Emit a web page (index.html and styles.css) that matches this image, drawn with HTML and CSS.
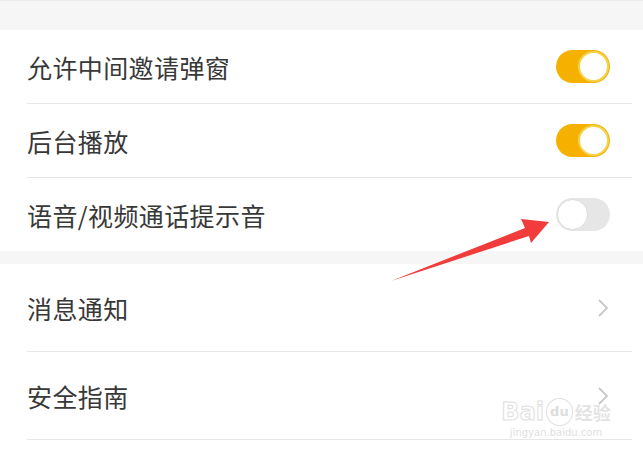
FILE: index.html
```html
<!DOCTYPE html>
<html lang="zh">
<head>
<meta charset="utf-8">
<link rel="stylesheet" href="styles.css">
</head>
<body>
<div class="page">
  <div class="gap gap-top"></div>
  <div class="group">
    <div class="row">
      <span class="label">允许中间邀请弹窗</span>
      <span class="toggle on"><span class="knob"></span></span>
    </div>
    <div class="row">
      <span class="label">后台播放</span>
      <span class="toggle on"><span class="knob"></span></span>
    </div>
    <div class="row last">
      <span class="label">语音/视频通话提示音</span>
      <span class="toggle off"><span class="knob"></span></span>
    </div>
  </div>
  <div class="gap gap-mid"></div>
  <div class="group">
    <div class="row tall">
      <span class="label">消息通知</span>
      <svg class="chev" width="12" height="20" viewBox="0 0 12 20"><path d="M2 2 L10 10 L2 18" fill="none" stroke="#c8c8c8" stroke-width="1.8"/></svg>
    </div>
    <div class="row tall">
      <span class="label">安全指南</span>
      <svg class="chev" width="12" height="20" viewBox="0 0 12 20"><path d="M2 2 L10 10 L2 18" fill="none" stroke="#c8c8c8" stroke-width="1.8"/></svg>
    </div>
    <div class="row tall"></div>
  </div>

  <svg class="arrow" width="643" height="461" viewBox="0 0 643 461">
    <path d="M391 281 L525 228 L521 219 L549 222 L531 243 L529 236 Z" fill="#f23b3b"/>
  </svg>

  <div class="watermark">
    <div class="wm-top"><span class="wm-bai">Bai</span><span class="wm-du">du</span><span class="wm-cn">经验</span></div>
    <div class="wm-url">jingyan.baidu.com</div>
  </div>
</div>
</body>
</html>
```
FILE: styles.css
```css
html, body {
  margin: 0;
  padding: 0;
}
body {
  background: #f7f7f7;
  font-family: "Noto Sans CJK SC", "Noto Sans", sans-serif;
  color: #333333;
}
.page {
  position: relative;
  width: 643px;
  height: 461px;
  overflow: hidden;
}
.gap-top {
  height: 29px;
  border-top: 1px solid #ececec;
  background: #f6f6f6;
}
.gap-mid {
  height: 13px;
  background: #f6f6f6;
}
.group {
  background: #ffffff;
}
.row {
  height: 73px;
  margin: 0 11px 0 27px;
  padding-right: 22px;
  border-bottom: 1px solid #e6e6e6;
  display: flex;
  align-items: center;
  justify-content: space-between;
}
.row.last {
  border-bottom: none;
}
.row.tall {
  height: 87px;
  padding-right: 23px;
}
.label {
  font-size: 25px;
  letter-spacing: 0.4px;
  color: #383838;
}
.toggle {
  width: 54px;
  height: 33px;
  border-radius: 17px;
  box-sizing: border-box;
  display: flex;
  align-items: center;
}
.toggle .knob {
  width: 31px;
  height: 31px;
  border-radius: 50%;
  background: #ffffff;
  box-sizing: border-box;
}
.toggle.on {
  background: #f6b100;
  justify-content: flex-end;
  padding: 1px;
}
.toggle.on .knob {
  border: 2px solid #f3d24e;
}
.toggle.off {
  background: #e6e6e6;
  justify-content: flex-start;
  padding: 1px;
}
.toggle.off .knob {
  border: 1px solid #dddddd;
}
.chev {
  display: block;
}
.arrow {
  position: absolute;
  left: 0;
  top: 0;
  pointer-events: none;
}
.watermark {
  position: absolute;
  left: 496px;
  top: 398px;
  width: 120px;
  color: #e6e6e6;
  font-family: "DejaVu Sans", "Noto Sans CJK SC", sans-serif;
  text-align: center;
}
.wm-top {
  display: flex;
  align-items: center;
  justify-content: center;
  gap: 2px;
  font-size: 24px;
  font-weight: bold;
  line-height: 26px;
}
.wm-bai {
  -webkit-text-stroke: 1px #dedede;
  color: transparent;
}
.wm-du {
  font-size: 13px;
  border: 1px solid #e0e0e0;
  border-radius: 50%;
  padding: 0 3px;
  color: #dddddd;
}
.wm-cn {
  font-size: 18px;
  color: #e4e4e4;
  font-family: "Noto Sans CJK SC", sans-serif;
}
.wm-url {
  font-size: 10px;
  line-height: 14px;
  color: #e0e0e0;
}
```
